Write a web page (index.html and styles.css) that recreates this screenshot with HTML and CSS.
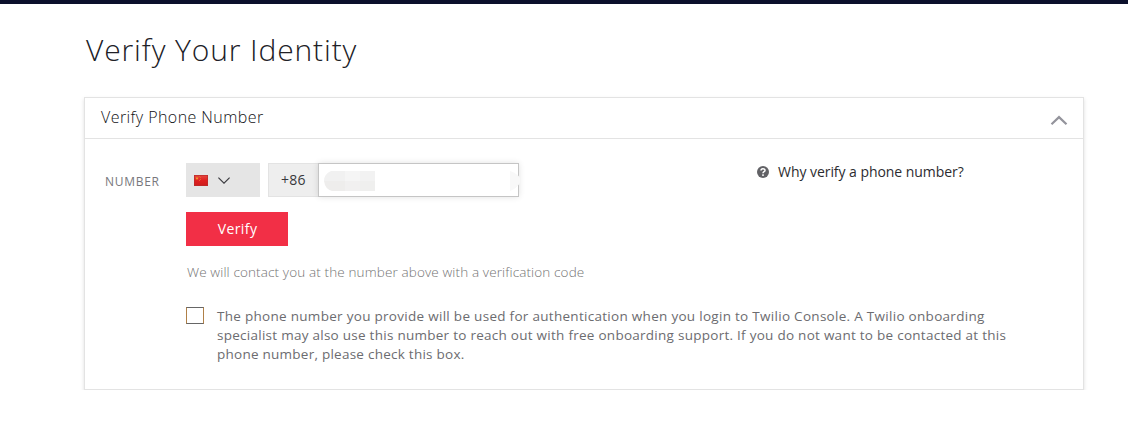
FILE: index.html
```html
<!DOCTYPE html>
<html lang="en">
<head>
<meta charset="utf-8">
<title>Verify Your Identity</title>
<link rel="stylesheet" href="styles.css">
</head>
<body>
<div class="topbar"></div>
<main class="page">
  <h1 class="title"><span>Verify Your Identity</span></h1>
  <section class="card">
    <header class="card-header">
      <h2 class="card-title">Verify Phone Number</h2>
      <svg class="collapse" width="18" height="12" viewBox="0 0 18 12"><path d="M1.500 10.300 9 3.100 16.500 10.300" fill="none" stroke="#94949c" stroke-width="2.2"/></svg>
    </header>
    <div class="card-body">
      <label class="label" for="phone">NUMBER</label>
      <div class="form">
        <div class="phone-row">
          <button class="country" type="button" aria-label="Country">
            <svg width="14" height="11" viewBox="0 0 14 11"><defs><linearGradient id="flag" x1="0" y1="0" x2="0" y2="1"><stop offset="0" stop-color="#e5443d"/><stop offset=".5" stop-color="#df2020"/><stop offset="1" stop-color="#cf1d1d"/></linearGradient></defs><rect width="14" height="11" fill="#b92b2b"/><rect x=".7" y=".7" width="12.600" height="9.600" fill="url(#flag)"/><path d="m3 1.500.5 1.200h1.300l-1 .8.400 1.300L3 4l-1.200.8.400-1.300-1-.8h1.300z" fill="#f3a02c"/><path d="M5 1h1v1H5zM6 2h1v1H6zM6 4h1v1H6zM5 5h1v1H5z" fill="#e8602c"/></svg>
            <svg class="arrow" width="12" height="7" viewBox="0 0 12 7"><path d="M.4.6 6 6.100 11.600.6" fill="none" stroke="#3b3b40" stroke-width="1.150"/></svg>
          </button>
          <span class="prefix">+86</span>
          <div class="field">
            <input class="input" id="phone" type="tel">
            <svg class="mask" width="202" height="34" viewBox="0 0 202 34"><path d="M13 8h14v10H6q0-7 7-10z" fill="#f1f1f1"/><path d="M6 18h21v10H14q-7-2-8-10z" fill="#eeedec"/><path d="M27 8h15v10H27z" fill="#f5f5f5"/><path d="M42 8h15v10H42z" fill="#f2f2f2"/><path d="M27 18h15v10H27z" fill="#f1f0f0"/><path d="M42 18h15v10H42z" fill="#efefee"/><path d="M192 8q8 3 10 7v5q-3 5-10 8z" fill="#f8f8f8"/></svg>
          </div>
        </div>
        <button class="verify" type="button"><span>Verify</span></button>
        <p class="hint"><span>We will contact you at the number above with a verification code</span></p>
        <label class="optout">
          <span class="checkbox"></span>
          <span class="optout-text"><span class="line l1">The phone number you provide will be used for authentication when you login to Twilio Console. A Twilio onboarding</span><span class="line l2">specialist may also use this number to reach out with free onboarding support. If you do not want to be contacted at this</span><span class="line l3">phone number, please check this box.</span></span>
        </label>
      </div>
      <a class="why"><svg width="12" height="12" viewBox="0 0 12 12"><circle cx="6" cy="6" r="6" fill="#626266"/><path d="M4 4.600C4 2.200 8 2.200 8 4.500 8 5.800 6 5.700 6 7.200M6 8.300v1.600" fill="none" stroke="#fff" stroke-width="1.500"/></svg><span>Why verify a phone number?</span></a>
    </div>
  </section>
</main>
</body>
</html>
```
FILE: styles.css
```css
* { box-sizing: border-box; }
body { margin: 0; background: #fff; font-family: "Open Sans", "Noto Sans", sans-serif; color: #202026; }
h1, h2, p { margin: 0; font-weight: 300; }
.topbar { height: 4px; background: #0b0f2b; }
.page { padding: 0 44px 0 84px; }
.title { height: 93px; padding: 24px 0 0 2px; font-size: 30px; line-height: 44px; white-space: nowrap; letter-spacing: .88px; }
.card { width: 1000px; height: 293px; border: 1px solid #e3e3e3; box-shadow: 0 2px 4px rgba(0,0,0,.13); }
.card-header { display: flex; justify-content: space-between; height: 41px; padding: 0 15px 0 16px; border-bottom: 1px solid #e3e3e3; }
.card-title { font-size: 16px; line-height: 38px; white-space: nowrap; letter-spacing: .43px; color: #101014; }
.collapse { margin-top: 16px; }
.card-body { display: flex; padding-top: 24px; }
.label { width: 101px; padding-left: 20px; font-size: 12px; line-height: 37px; letter-spacing: .7px; color: #77777c; }
.form { width: 571px; }
.phone-row { display: flex; height: 34px; }
.country { display: flex; width: 74px; height: 34px; margin-right: 8px; padding: 0 0 0 8px; align-items: center; border: 0; background: #e5e5e5; }
.arrow { margin-left: 10px; }
.prefix { width: 50px; border: 1px solid #e3e3e3; border-right: 0; background: #eee; font-size: 14px; letter-spacing: .2px; line-height: 32px; padding-left: 12px; color: #38383c; }
.field { position: relative; width: 202px; height: 34px; }
.input { width: 201px; height: 34px; border: 1px solid #c5c5c5; border-radius: 0; background: #fff; box-shadow: 0 0 6px rgba(0,0,0,.12); outline: 0; }
.mask { position: absolute; top: 0; left: 0; }
.verify { display: block; width: 102px; height: 34px; margin-top: 15px; padding: 0 0 0 1px; border: 0; background: #f22f46; color: #fff; font: 400 14px/34px "Open Sans", sans-serif; letter-spacing: .4px; }
.hint { padding: 16px 0 0 1px; font-size: 13.5px; line-height: 20px; letter-spacing: .13px; color: #747474; white-space: nowrap; }
.optout { display: flex; margin-top: 25px; }
.checkbox { flex: none; width: 18px; height: 17px; border: 1px solid #666; border-left-color: #b08048; border-right-color: #b08048; }
.optout-text { margin-left: 13px; font-size: 13.5px; line-height: 19px; color: #6c6c70; }
.line { display: block; white-space: nowrap; }
.l1 { letter-spacing: .29px; }
.l2 { letter-spacing: .265px; }
.l3 { letter-spacing: .25px; }
.why { display: flex; align-items: center; gap: 9px; height: 17px; font-size: 14px; letter-spacing: -.05px; white-space: nowrap; color: #2c2c30; }
```
